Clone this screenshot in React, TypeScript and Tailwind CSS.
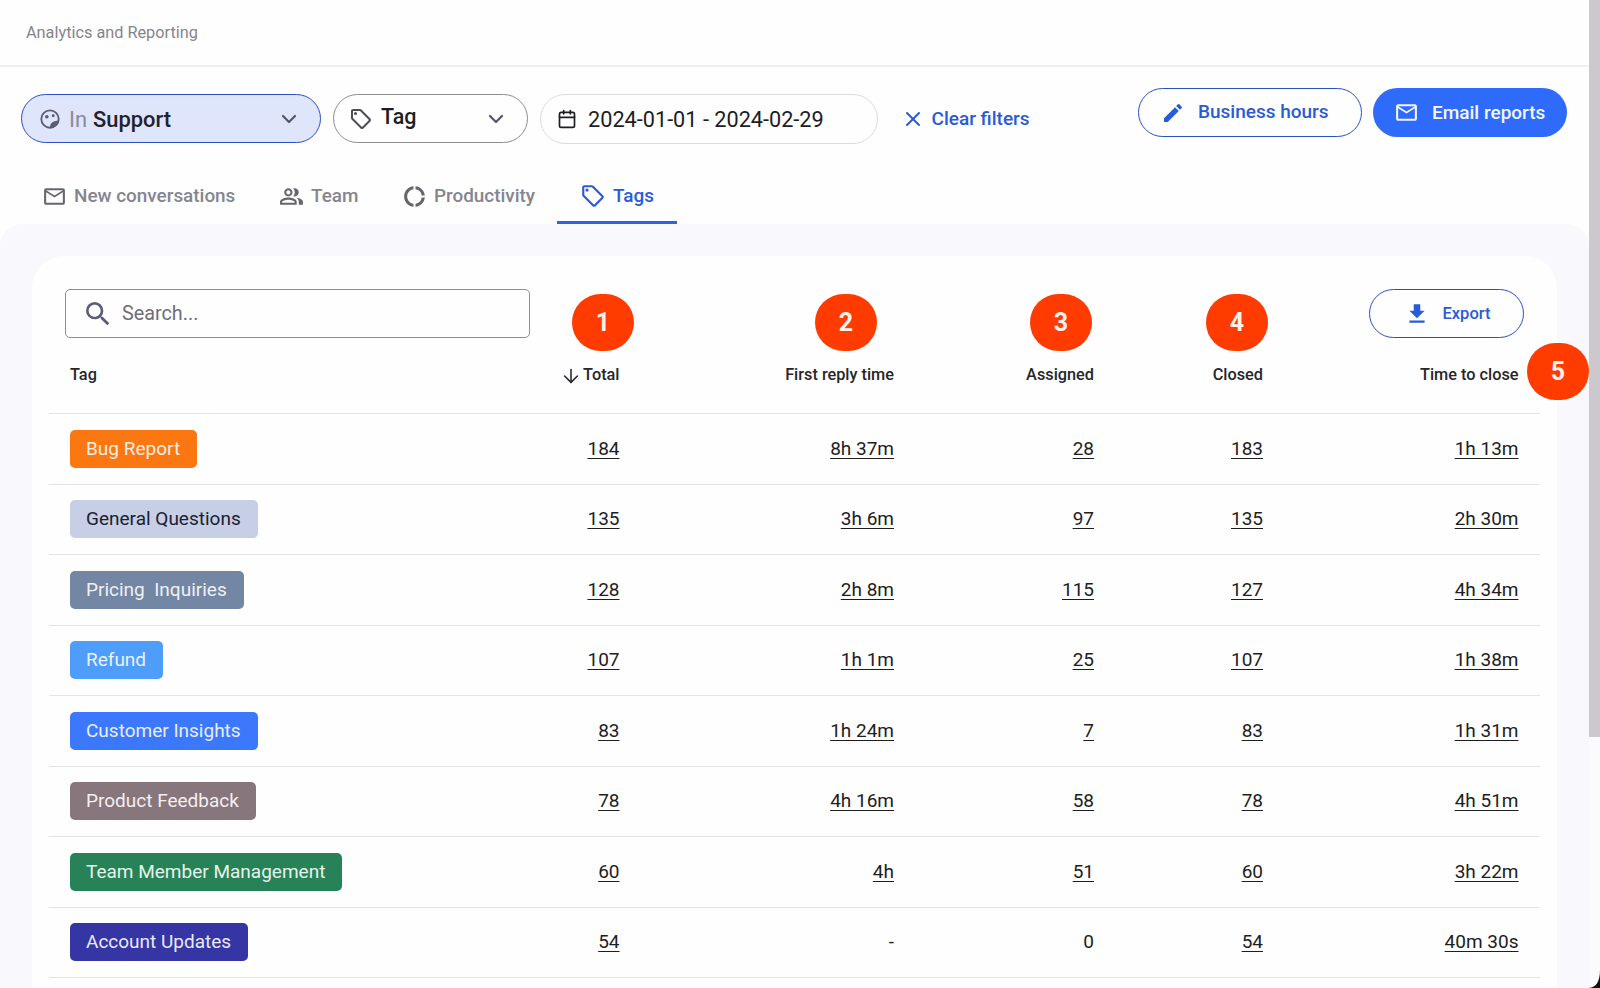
import { ArrowDown, Calendar, ChevronDown, X } from 'lucide-react';
import {
  MdEdit,
  MdFileDownload,
  MdMailOutline,
  MdOutlineDonutLarge,
  MdOutlineLocalOffer,
  MdOutlinePeopleAlt,
  MdSearch,
} from 'react-icons/md';

type Row = {
  tag: string;
  tagClass: string;
  total: string;
  reply: string;
  assigned: string;
  closed: string;
  close: string;
};

const ROWS: Row[] = [
  { tag: 'Bug Report', tagClass: 'bg-[#fb7712] text-[#fdeee2]', total: '184', reply: '8h 37m', assigned: '28', closed: '183', close: '1h 13m' },
  { tag: 'General Questions', tagClass: 'bg-[#c6cfe6] text-[#1c2030]', total: '135', reply: '3h 6m', assigned: '97', closed: '135', close: '2h 30m' },
  { tag: 'Pricing  Inquiries', tagClass: 'bg-[#7386a3] text-[#eef1f6]', total: '128', reply: '2h 8m', assigned: '115', closed: '127', close: '4h 34m' },
  { tag: 'Refund', tagClass: 'bg-[#4f9dfb] text-[#e8f2fe]', total: '107', reply: '1h 1m', assigned: '25', closed: '107', close: '1h 38m' },
  { tag: 'Customer Insights', tagClass: 'bg-[#3c78fb] text-[#e6eefe]', total: '83', reply: '1h 24m', assigned: '7', closed: '83', close: '1h 31m' },
  { tag: 'Product Feedback', tagClass: 'bg-[#87767b] text-[#f5eff0]', total: '78', reply: '4h 16m', assigned: '58', closed: '78', close: '4h 51m' },
  { tag: 'Team Member Management', tagClass: 'bg-[#278257] text-[#e6f3ec]', total: '60', reply: '4h', assigned: '51', closed: '60', close: '3h 22m' },
  { tag: 'Account Updates', tagClass: 'bg-[#3535a3] text-[#eaeaf8]', total: '54', reply: '-', assigned: '0', closed: '54', close: '40m 30s' },
];

const TABS = [
  { label: 'New conversations', icon: <MdMailOutline className="text-[25px]" />, cls: 'gap-[7px] w-[192px] mr-[45px]' },
  { label: 'Team', icon: <MdOutlinePeopleAlt className="text-[25px]" />, cls: 'gap-[7px] w-[80px] mr-[43px]' },
  { label: 'Productivity', icon: <MdOutlineDonutLarge className="text-[25px]" />, cls: 'gap-[7px] w-[131px] mr-[24px]' },
];

const GRID = 'grid grid-cols-[400px_170.5px_274.5px_200px_169px_277px] items-center text-right';

function Marker({ n, className }: { n: number; className: string }) {
  return (
    <div className={`absolute flex h-[57px] w-[62px] items-center justify-center rounded-full bg-[#ff3b00] text-[25px] font-bold text-[#fdf1ec] ${className}`}>
      {n}
    </div>
  );
}

function Cell({ value, last }: { value: string; last?: boolean }) {
  const plain = value === '-' || value === '0';
  return (
    <div className={last ? 'pr-[21.5px]' : ''}>
      <span className={plain ? '' : 'underline underline-offset-[3px] decoration-1'}>{value}</span>
    </div>
  );
}

export default function App() {
  return (
    <div className="relative flex h-[988px] w-[1600px] overflow-hidden bg-[#fefefe] font-['Roboto',sans-serif] text-[#1d1d22]">
      <div className="flex min-w-0 flex-1 flex-col">
        {/* Page title */}
        <header className="flex h-[67px] shrink-0 items-center border-b-2 border-[#f0eff3] pl-[26px] pt-[2px] text-[16.3px] text-[#85858c]">
          Analytics and Reporting
        </header>

        {/* Filters */}
        <div className="flex h-[101px] shrink-0 justify-between pl-[21px] pr-[22px]">
          <div className="flex items-start gap-[12px] pt-[27px]">
            <button className="flex h-[49px] w-[300px] items-center rounded-full border border-[#2b50c4] bg-[#dfe5fb] pl-[17px] pr-[19px] text-[21.9px]">
              <svg viewBox="0 0 24 24" className="h-[22px] w-[22px] text-[#5c5c78]" fill="none">
                <circle cx="12" cy="12" r="9.5" stroke="currentColor" strokeWidth="2" />
                <circle cx="8.5" cy="9.5" r="2" fill="currentColor" />
                <circle cx="15.5" cy="8.5" r="1.6" fill="currentColor" />
                <path d="M12 21.5c0-5 3-7.5 9.5-7.5-.8 4.5-4.5 7.5-9.5 7.5Z" fill="currentColor" />
              </svg>
              <span className="ml-[8px] mt-[4px] text-[#8a8aa0]">In</span>
              <span className="ml-[6px] mt-[4px] font-[480] text-[#22222e]">Support</span>
              <ChevronDown className="ml-auto h-[24px] w-[24px] text-[#55556a]" strokeWidth={2.2} />
            </button>
            <button className="flex h-[49px] w-[195px] items-center rounded-full border border-[#8e8e92] pl-[15px] pr-[19px] text-[21.5px]">
              <MdOutlineLocalOffer className="text-[24px] text-[#4d4d58]" />
              <span className="ml-[8px] -mt-[2px] font-[480]">Tag</span>
              <ChevronDown className="ml-auto h-[24px] w-[24px] text-[#55556a]" strokeWidth={2.2} />
            </button>
            <div className="flex h-[50px] w-[338px] items-center rounded-full border border-[#dcdbdf] pl-[16px] text-[21.7px]">
              <Calendar className="h-[20px] w-[20px]" strokeWidth={2} />
              <span className="ml-[11px] mt-[3px]">2024-01-01 - 2024-02-29</span>
            </div>
            <button className="ml-[11px] flex h-[50px] items-center text-[19px] font-[480] text-[#2a5bd7]">
              <X className="h-[24px] w-[24px]" strokeWidth={2} />
              <span className="ml-[6.5px] mt-[1px]">Clear filters</span>
            </button>
          </div>
          <div className="flex items-start gap-[11px] pt-[21px]">
            <button className="flex h-[49px] w-[224px] items-center rounded-full border border-[#2b50c4] pl-[22px] text-[19px] font-[480] text-[#2a5bd7]">
              <MdEdit className="text-[24px]" />
              <span className="ml-[13px] -mt-[1px]">Business hours</span>
            </button>
            <button className="flex h-[49px] w-[194px] items-center rounded-full bg-[#2f6bfb] pl-[21px] text-[19px] font-[480] text-[#f2f6ff]">
              <MdMailOutline className="text-[25px]" />
              <span className="ml-[13px] mt-[1px]">Email reports</span>
            </button>
          </div>
        </div>

        {/* Tabs */}
        <nav className="flex h-[56px] shrink-0 items-stretch whitespace-nowrap pl-[42px] text-[18.9px] font-[480] text-[#85858e]">
          {TABS.map(tab => (
            <div key={tab.label} className={`flex items-center ${tab.cls}`}>
              <span className="text-[#66666f]">{tab.icon}</span>
              {tab.label}
            </div>
          ))}
          <div className="flex w-[120px] items-center gap-[7px] border-b-[3px] border-[#2f63e0] pl-[23px] pt-[3px] text-[#2a5bd7]">
            <MdOutlineLocalOffer className="text-[26px]" />
            Tags
          </div>
        </nav>

        {/* Panel */}
        <main className="min-h-0 flex-1 rounded-t-[22px] bg-[#f8f8fd] px-[32px] pt-[32px]">
          <section className="h-full rounded-t-[32px] bg-[#fefefe] px-[17px] pt-[33px]">
            <div className="flex items-center justify-between pl-[16px] pr-[16.5px]">
              <div className="flex h-[49px] w-[465px] items-center rounded-[5px] border border-[#8e8e94] pl-[18px] text-[19.8px] text-[#6f6f78]">
                <MdSearch className="text-[32px] text-[#5c5c78] -ml-[2px]" />
                <span className="ml-[8px] mt-[1px]">Search...</span>
              </div>
              <button className="flex h-[49px] w-[155px] items-center rounded-full border border-[#2b50c4] pl-[34px] text-[16.5px] font-[480] text-[#2a5bd7]">
                <MdFileDownload className="text-[26px]" />
                <span className="ml-[13px] mt-[1px]">Export</span>
              </button>
            </div>

            {/* Table */}
            <div className={`${GRID} h-[76px] border-b border-[#e3e3e7] text-[16.3px] font-[480] text-[#26262b]`}>
              <div className="pl-[21px] text-left">Tag</div>
              <div className="flex items-center justify-end gap-[1px]">
                <ArrowDown className="h-[22px] w-[22px]" strokeWidth={1.7} />
                Total
              </div>
              <div>First reply time</div>
              <div>Assigned</div>
              <div>Closed</div>
              <div className="pr-[21.5px]">Time to close</div>
            </div>
            {ROWS.map(row => (
              <div key={row.tag} className={`${GRID} h-[70.5px] border-b border-[#e3e3e7] text-[19px] text-[#1d1d22]`}>
                <div className="pl-[21px] text-left">
                  <span className={`inline-flex h-[38px] items-center whitespace-pre rounded-[5px] pl-[16px] pr-[17px] ${row.tagClass}`}>
                    {row.tag}
                  </span>
                </div>
                <Cell value={row.total} />
                <Cell value={row.reply} />
                <Cell value={row.assigned} />
                <Cell value={row.closed} />
                <Cell value={row.close} last />
              </div>
            ))}
          </section>
        </main>
      </div>

      {/* Scrollbar */}
      <div className="w-[11px] shrink-0 bg-[#fbfafc]">
        <div className="h-[737px] bg-[#cbc9ce]" />
      </div>

      <Marker n={1} className="left-[572px] top-[294px]" />
      <Marker n={2} className="left-[815px] top-[294px]" />
      <Marker n={3} className="left-[1030px] top-[294px]" />
      <Marker n={4} className="left-[1206px] top-[294px]" />
      <Marker n={5} className="left-[1527px] top-[343px]" />

      {/* Screen corner */}
      <svg viewBox="0 0 12 18" className="absolute bottom-0 right-0 h-[18px] w-[12px]">
        <path d="M12 0v18H0C7 18 12 13 12 0Z" fill="#111" />
      </svg>
    </div>
  );
}
